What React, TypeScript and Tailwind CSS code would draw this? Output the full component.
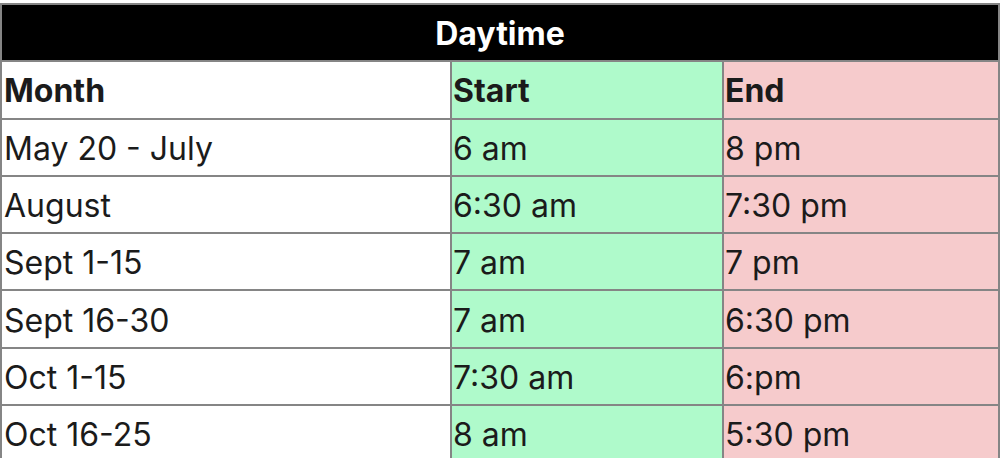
const rows = [
  { month: 'May 20 - July', start: '6 am', end: '8 pm' },
  { month: 'August', start: '6:30 am', end: '7:30 pm' },
  { month: 'Sept 1-15', start: '7 am', end: '7 pm' },
  { month: 'Sept 16-30', start: '7 am', end: '6:30 pm' },
  { month: 'Oct 1-15', start: '7:30 am', end: '6:pm' },
  { month: 'Oct 16-25', start: '8 am', end: '5:30 pm' },
]

function Row({ a, b, c, bold = false }: { a: string; b: string; c: string; bold?: boolean }) {
  const weight = bold ? 'font-bold' : 'font-normal'
  return (
    <div className={`flex h-[57.3px] border-b-2 border-[#858585] ${weight}`}>
      <div className="w-[450px] flex items-center pl-[2px] pt-[3px] bg-white border-r-2 border-[#858585]">{a}</div>
      <div className="w-[272px] flex items-center pl-[1px] pt-[3px] bg-[#affacb] border-r-2 border-[#858585]">{b}</div>
      <div className="flex-1 flex items-center pl-[1px] pt-[3px] bg-[#f6cbcc]">{c}</div>
    </div>
  )
}

export default function App() {
  return (
    <div className="w-[1002px] h-[458px] overflow-hidden bg-white pt-[3px]">
      <div
        className="w-[1000px] border-2 border-[#858585] text-[32px] text-[#1b1b1b] leading-none"
        style={{ fontFamily: 'Inter, "Noto Sans", sans-serif' }}
      >
        <div className="h-[57.3px] pt-[2px] bg-black text-white font-bold flex items-center justify-center border-b-2 border-[#858585]">
          Daytime
        </div>
        <Row a="Month" b="Start" c="End" bold />
        {rows.map((r, i) => (
          <Row key={i} a={r.month} b={r.start} c={r.end} />
        ))}
      </div>
    </div>
  )
}
